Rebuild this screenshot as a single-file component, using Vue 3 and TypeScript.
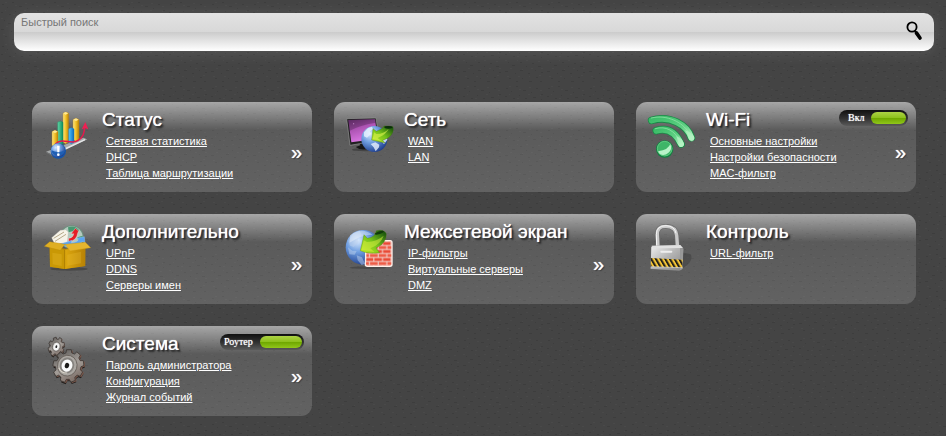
<script setup lang="ts">
import { ref } from 'vue'

type IconName = 'stats' | 'network' | 'wifi' | 'box' | 'firewall' | 'lock' | 'gears'

interface Card {
  icon: IconName
  title: string
  links: string[]
  more?: boolean
  toggle?: string
  wide?: boolean
}

const query = ref('')

const cards: Card[] = [
  { icon: 'stats', title: 'Статус', links: ['Сетевая статистика', 'DHCP', 'Таблица маршрутизации'], more: true },
  { icon: 'network', title: 'Сеть', links: ['WAN', 'LAN'] },
  { icon: 'wifi', title: 'Wi-Fi', links: ['Основные настройки', 'Настройки безопасности', 'MAC-фильтр'], more: true, toggle: 'Вкл' },
  { icon: 'box', title: 'Дополнительно', links: ['UPnP', 'DDNS', 'Серверы имен'], more: true },
  { icon: 'firewall', title: 'Межсетевой экран', links: ['IP-фильтры', 'Виртуальные серверы', 'DMZ'], more: true },
  { icon: 'lock', title: 'Контроль', links: ['URL-фильтр'] },
  { icon: 'gears', title: 'Система', links: ['Пароль администратора', 'Конфигурация', 'Журнал событий'], more: true, toggle: 'Роутер', wide: true },
]

// Outline of a gear centred on 0,0
function gear(teeth: number, outer: number, inner: number): string {
  const step = (Math.PI * 2) / teeth
  const points: string[] = []
  for (let i = 0; i < teeth; i++) {
    const a = i * step
    const pairs: [number, number][] = [[inner, 0], [outer, 0.1], [outer, 0.54], [inner, 0.66]]
    for (const [r, t] of pairs) {
      points.push(`${(Math.cos(a + t * step) * r).toFixed(1)},${(Math.sin(a + t * step) * r).toFixed(1)}`)
    }
  }
  return points.join(' ')
}

const bigGear = gear(9, 43, 35)
const smallGear = gear(8, 27, 21)
</script>

<template>
  <div class="page">
    <svg class="defs" width="0" height="0" aria-hidden="true">
      <defs>
        <radialGradient id="globe" cx="0.35" cy="0.3" r="0.75">
          <stop offset="0" stop-color="#dcecff" />
          <stop offset="0.45" stop-color="#6f9ee0" />
          <stop offset="1" stop-color="#1d3d8c" />
        </radialGradient>
        <linearGradient id="leaf" x1="0" y1="1" x2="1" y2="0">
          <stop offset="0" stop-color="#c6ee28" />
          <stop offset="0.5" stop-color="#73c11a" />
          <stop offset="1" stop-color="#083f0a" />
        </linearGradient>
        <linearGradient id="gold" x1="0" x2="1">
          <stop offset="0" stop-color="#f9e184" />
          <stop offset="0.5" stop-color="#f2c227" />
          <stop offset="1" stop-color="#b97f08" />
        </linearGradient>
        <linearGradient id="teal" x1="0" x2="1">
          <stop offset="0" stop-color="#63d7a6" />
          <stop offset="1" stop-color="#0c8c5c" />
        </linearGradient>
        <linearGradient id="azure" x1="0" x2="1">
          <stop offset="0" stop-color="#52c8ff" />
          <stop offset="1" stop-color="#0b69ba" />
        </linearGradient>
        <linearGradient id="screen" x1="0" y1="0" x2="0.4" y2="1">
          <stop offset="0" stop-color="#6a3070" />
          <stop offset="0.4" stop-color="#a850ae" />
          <stop offset="1" stop-color="#dc79e5" />
        </linearGradient>
        <linearGradient id="mint" x1="0" y1="0" x2="1" y2="1">
          <stop offset="0" stop-color="#3bbc68" />
          <stop offset="0.6" stop-color="#5fd083" />
          <stop offset="1" stop-color="#b5f2c2" />
        </linearGradient>
        <linearGradient id="steel" x1="0" y1="0" x2="1" y2="1">
          <stop offset="0" stop-color="#eeeeee" />
          <stop offset="0.5" stop-color="#b5b5b5" />
          <stop offset="1" stop-color="#888888" />
        </linearGradient>
        <linearGradient id="cog" x1="0" y1="0" x2="1" y2="1">
          <stop offset="0" stop-color="#4c4a48" />
          <stop offset="0.5" stop-color="#a39d98" />
          <stop offset="1" stop-color="#6d5b53" />
        </linearGradient>
        <linearGradient id="card-board" x1="0" x2="1">
          <stop offset="0" stop-color="#dda80f" />
          <stop offset="1" stop-color="#b88204" />
        </linearGradient>
        <pattern id="hazard" width="14" height="30" patternUnits="userSpaceOnUse" patternTransform="skewX(30)">
          <rect width="14" height="30" fill="#f5c535" />
          <rect width="7" height="30" fill="#23211b" />
        </pattern>
        <pattern id="bricks" width="26" height="24" patternUnits="userSpaceOnUse" x="118" y="100">
          <rect width="26" height="24" fill="#f2d8d1" />
          <rect x="1" y="2" width="23" height="9" fill="#e94a36" />
          <rect x="-12" y="14" width="23" height="9" fill="#ee5b46" />
          <rect x="14" y="14" width="23" height="9" fill="#ee5b46" />
        </pattern>
      </defs>
    </svg>

    <form class="search" role="search" @submit.prevent>
      <input v-model="query" class="search-input" type="search" placeholder="Быстрый поиск" aria-label="Быстрый поиск" />
      <button class="search-button" type="submit" aria-label="Найти">
        <svg viewBox="0 0 18 22" width="18" height="22" aria-hidden="true">
          <circle cx="6" cy="7" r="4.6" fill="none" stroke="#000" stroke-width="1.8" />
          <path d="M8.8 10.8 10.3 12.9" stroke="#000" stroke-width="1.6" />
          <path d="M10.4 12.9 14 18" stroke="#000" stroke-width="3.6" stroke-linecap="round" />
        </svg>
      </button>
    </form>

    <main class="cards">
      <section v-for="card in cards" :key="card.title" class="card">
        <svg v-if="card.icon === 'stats'" class="icon" viewBox="60 51 144 144" aria-hidden="true">
          <path d="M66 170 178 128 190 133 86 180Z" fill="#a6a9aa" />
          <path d="M86 176 182 132 184 136 90 181Z" fill="#e3e5e6" />
          <path d="M66 170 86 180 86 184 68 174Z" fill="#717374" />
          <g stroke-width="1">
            <path d="M117 55Q125 49 134 55V141L125 146 117 141Z" fill="url(#gold)" stroke="#c68c10" />
            <path d="M101 82Q109 75 117 82V148L109 152 101 148Z" fill="url(#teal)" stroke="#168b61" />
            <path d="M147 74Q156 67 165 74V134L156 139 147 134Z" fill="url(#gold)" stroke="#c68c10" />
            <path d="M134 102Q142 94 150 102V142L142 147 134 142Z" fill="url(#azure)" stroke="#1476bd" />
            <path d="M84 110Q93 103 102 110V150L93 158 84 152Z" fill="url(#gold)" stroke="#c68c10" />
          </g>
          <path d="M118 55 125 51 133 55 125 59ZM148 74 156 70 164 74 156 78ZM85 110 93 106 101 110 93 114Z" fill="#ffe996" />
          <path d="M94 147C118 125 139 151 161 137C178 127 180 114 182 99" fill="none" stroke="#e8174c" stroke-width="4.5" />
          <path d="M184 81 193 103 183 99 173 103Z" fill="#f01f52" />
          <circle cx="103" cy="168" r="23" fill="#1455a9" />
          <circle cx="102" cy="166" r="21" fill="url(#globe)" />
          <path d="M82 166A21 21 0 0 0 123 166Q103 177 82 166" fill="#1f5fb3" />
          <path d="M99 152H107L106 172H100Z" fill="#fff" />
          <circle cx="103" cy="179" r="4" fill="#fff" />
        </svg>

        <svg v-else-if="card.icon === 'network'" class="icon" viewBox="60 51 144 144" aria-hidden="true">
          <ellipse cx="120" cy="164" rx="42" ry="5" fill="#333" opacity=".6" />
          <path d="M98 142 124 138 127 153 137 158Q108 170 89 156L103 151Z" fill="#171717" />
          <path d="M62 71 150 69 160 136 72 151Z" fill="#202020" stroke="#949494" stroke-width="2" />
          <path d="M67 75 147 73 155 131 76 142Z" fill="url(#screen)" />
          <path d="M67 75 147 73 149 83Q98 91 70 108Z" fill="#3d1d42" opacity=".35" />
          <circle cx="83" cy="86" r="1.5" fill="#e7b1ee" />
          <circle cx="145" cy="132" r="39" fill="url(#globe)" />
          <path d="M114 112 126 99 138 95 141 103 132 109 135 117 123 128 114 124ZM134 147 148 142 160 149 159 157 149 169 143 157ZM168 122 181 123 184 134 174 148 167 139Z" fill="#e8f2ff" opacity=".8" />
          <path d="M137 135 141 101 151 109Q171 102 174 93Q185 93 201 95Q207 123 170 136L177 144Z" fill="url(#leaf)" stroke="#376e10" stroke-width="1" />
          <path d="M145 112 140 132 166 138 155 129Q181 118 188 101Q176 116 151 117Z" fill="#d7ef4b" opacity=".65" />
          <ellipse cx="187" cy="97" rx="12" ry="4" fill="#0b2e0a" />
        </svg>

        <svg v-else-if="card.icon === 'wifi'" class="icon" viewBox="54 51 144 144" aria-hidden="true">
          <g fill="none" stroke-linecap="round">
            <path d="M65 76C121 60 171 90 184 128" stroke="#198a47" stroke-width="23" />
            <path d="M65 76C121 60 171 90 184 128" stroke="url(#mint)" stroke-width="18" />
            <path d="M64 69C112 57 159 83 176 112" stroke="#9ae9af" stroke-width="2" />
            <path d="M79 107C116 96 139 117 153 147" stroke="#198a47" stroke-width="23" />
            <path d="M79 107C116 96 139 117 153 147" stroke="url(#mint)" stroke-width="18" />
            <path d="M76 101C109 91 135 109 149 137" stroke="#9ae9af" stroke-width="2" />
          </g>
          <path d="M165 106Q183 110 193 128Q193 139 183 139ZM139 124Q159 131 162 147Q161 158 150 156Z" fill="#b2f2c2" opacity=".7" />
          <circle cx="104" cy="162" r="26" fill="#127f41" />
          <circle cx="104" cy="161" r="23" fill="#3eb567" />
          <path d="M84 169Q116 164 121 146A24 24 0 0 1 88 177Z" fill="#b9f2c8" />
          <circle cx="104" cy="161" r="22" fill="none" stroke="#6fd48e" stroke-width="2" />
        </svg>

        <svg v-else-if="card.icon === 'box'" class="icon" viewBox="60 48 144 144" aria-hidden="true">
          <ellipse cx="135" cy="183" rx="56" ry="5" fill="#333" opacity=".5" />
          <circle cx="143" cy="88" r="36" fill="#6d8f7e" />
          <circle cx="143" cy="88" r="33" fill="#b4cabf" />
          <path d="M132 58Q152 51 165 66L159 79 145 70 134 73ZM160 88 176 83 178 99 164 104Z" fill="#489971" />
          <path d="M83 89 109 67 125 65 133 72 130 103 93 110Z" fill="#f6f3e8" stroke="#bbb7ad" stroke-width="1" />
          <path d="M89 91 120 72M93 100 126 79" stroke="#b7aa8b" stroke-width="3" />
          <path d="M134 101 134 91Q148 89 149 77L141 78 154 61 164 69 161 75Q159 98 134 101Z" fill="#e51e26" stroke="#fff" stroke-width="1" />
          <path d="M109 108 144 97 142 104Q162 103 164 93L158 91 181 86 183 105 175 101Q159 117 121 114Z" fill="#5ba4f1" stroke="#acd5ff" stroke-width="1" />
          <path d="M77 111 124 122 184 111 183 174 122 183 78 176Z" fill="#ac7d07" />
          <path d="M77 115 122 125V183L78 176Z" fill="#c99805" />
          <path d="M122 125 184 113V174L122 183Z" fill="url(#card-board)" />
          <path d="M77 101 61 115 109 127 123 109Z" fill="#dfae22" stroke="#b98907" stroke-width="1" />
          <path d="M123 109 184 103 200 119 138 129Z" fill="#e5b52e" stroke="#c69510" stroke-width="1" />
          <path d="M85 134 113 139V174L86 169ZM130 140 171 131V166L130 173Z" fill="#f6cd45" opacity=".22" />
          <path d="M122 126V183" stroke="#9e7100" stroke-width="2" />
        </svg>

        <svg v-else-if="card.icon === 'firewall'" class="icon" viewBox="60 48 144 144" aria-hidden="true">
          <ellipse cx="126" cy="179" rx="55" ry="4" fill="#333" opacity=".5" />
          <circle cx="111" cy="118" r="52" fill="url(#globe)" />
          <path d="M67 99 82 76 101 68 106 81 96 92 98 103 83 117 72 113ZM92 142 108 148 117 167 107 171 95 157ZM66 118 79 128 92 129 86 140 70 139Z" fill="#bcd0eb" opacity=".5" />
          <path d="M72 82Q106 55 140 80Q105 80 71 104Z" fill="#fff" opacity=".35" />
          <path d="M119 147V127H140V111H159V102Q159 98 164 98H193Q198 98 198 104V169Q198 175 192 175H124Q118 175 118 169Z" fill="url(#bricks)" stroke="#fff0ea" stroke-width="4" stroke-linejoin="round" />
          <path d="M103 128 114 80 124 91Q148 87 151 68Q175 63 181 78Q182 106 150 120L161 134Q127 139 103 128Z" fill="url(#leaf)" stroke="#477b09" stroke-width="1" />
          <path d="M113 97 107 125 145 132 133 121Q164 109 173 83Q153 101 123 102Z" fill="#d6ec3f" opacity=".55" />
          <ellipse cx="160" cy="74" rx="14" ry="4" fill="#103b0a" transform="rotate(-18 160 74)" />
        </svg>

        <svg v-else-if="card.icon === 'lock'" class="icon" viewBox="54 48 144 144" aria-hidden="true">
          <path d="M151 132 182 139Q192 160 158 181Z" fill="#292929" opacity=".3" />
          <path d="M84 119 82 80Q81 54 108 55Q138 56 140 82L143 122" fill="none" stroke="#6c6c6c" stroke-width="14" />
          <path d="M84 119 82 80Q81 54 108 55Q138 56 140 82L143 122" fill="none" stroke="#c9c9c9" stroke-width="10" />
          <path d="M80 116 79 80Q79 53 108 53Q134 54 138 76" fill="none" stroke="#f6f6f6" stroke-width="3" />
          <path d="M65 113 151 111 160 122 157 184 147 188 62 183Z" fill="#868686" />
          <path d="M64 116 151 120V187L62 182Z" fill="url(#steel)" />
          <path d="M151 119 160 122 158 182 150 187Z" fill="#999" />
          <path d="M65 113 151 111 159 120 69 121Z" fill="#e1e1e1" />
          <path d="M63 150 158 155 157 179 62 176Z" fill="url(#hazard)" />
          <path d="M63 176 157 179" stroke="#ddd" stroke-width="2" />
          <rect x="91" y="128" width="36" height="6" rx="3" fill="#eee" />
        </svg>

        <svg v-else class="icon" viewBox="60 48 144 144" aria-hidden="true">
          <g transform="translate(97 80) rotate(16) scale(.9 1.08)">
            <polygon :points="smallGear" fill="#292421" transform="translate(3 4)" />
            <polygon :points="smallGear" fill="#8d6c60" transform="translate(2 1)" />
            <polygon :points="smallGear" fill="url(#cog)" stroke="#3a3532" stroke-width="2" />
            <circle r="13" fill="#c6c4c0" stroke="#5d5855" stroke-width="2" />
            <ellipse rx="9" ry="10" fill="#f6f6f6" />
            <ellipse rx="3" ry="4" fill="#252525" />
          </g>
          <g transform="translate(133 138) rotate(18) scale(1.08 1.16)">
            <polygon :points="bigGear" fill="#231f1d" transform="translate(4 4)" />
            <polygon :points="bigGear" fill="#7e594c" transform="translate(4 1)" />
            <polygon :points="bigGear" fill="url(#cog)" stroke="#3b3632" stroke-width="2" />
            <circle cx="-3" r="27" fill="#aaa6a1" stroke="#625b55" stroke-width="2" />
            <ellipse cx="-4" rx="20" ry="21" fill="#85827e" />
            <ellipse cx="-4" rx="15" ry="16" fill="#fbfbfb" />
            <ellipse cx="-4" rx="6" ry="7" fill="#1c1b19" />
            <path d="M-24 12Q-11 24 3 18" fill="none" stroke="#ddd8cd" stroke-width="3" />
          </g>
        </svg>

        <div class="content">
          <header class="head">
            <h2 class="title">{{ card.title }}</h2>
            <label v-if="card.toggle" class="toggle" :class="{ wide: card.wide }">
              <span>{{ card.toggle }}</span>
              <input class="knob" type="checkbox" checked />
            </label>
          </header>
          <div class="body">
            <ul class="links">
              <li v-for="link in card.links" :key="link"><a href="#">{{ link }}</a></li>
            </ul>
            <button v-if="card.more" class="more" type="button" :aria-label="`${card.title}: все разделы`">»</button>
          </div>
        </div>
      </section>
    </main>
  </div>
</template>

<style>
body {
  background-color: #444;
  background-image: url("data:image/svg+xml,%3Csvg xmlns='http://www.w3.org/2000/svg' width='42' height='42' shape-rendering='crispEdges' fill='none'%3E%3Cpath stroke='%233d3d3d' d='M2 4h2m3 3h1m4-5h2m5 4h3m5 2h1m4-4h2m3 6h2M1 12h2m6 2h2m4-3h1m5 3h2m6-1h3m5 2h1M4 20h1m3 3h3m5-3h2m4 4h1m5-3h2m4 3h3M1 29h3m7 2h1m4-3h3m5 3h2m5-3h1m5 2h2M5 36h2m5 3h2m4-3h1m6 3h3m4-4h2m2 4h2'/%3E%3Cpath stroke='%23494949' d='M5 2h2m8 3h2m8-2h2m9 3h2M5 10h1m7 4h2m9-4h2m10 1h1M1 18h2m10 0h1m8 0h2m10 1h2M6 26h2m10 1h1m8-1h2m8 0h2M3 34h2m9 0h2m9 0h1m9-1h2'/%3E%3C/svg%3E");
}
</style>

<style scoped>
.page {
  padding: 13px 12px 20px 14px;
  font-family: "Liberation Sans", Arial, sans-serif;
  font-size: 11px;
  color: #fff;
}

.defs {
  position: absolute;
}

.search {
  display: flex;
  align-items: flex-start;
  height: 38px;
  border-radius: 10px;
  background: linear-gradient(#e2e2e2, #d8d8d8 50%, #cccccc 51%, #fff);
  box-shadow: 0 2px 16px rgba(255, 255, 255, 0.1);
}

.search-input {
  flex: 1;
  min-width: 0;
  height: 18px;
  padding: 0 7px;
  border: 0;
  outline: 0;
  background: none;
  font: inherit;
  color: #333;
}

.search-input::placeholder {
  color: #777;
}

.search-button {
  padding: 7px 10px 0;
  border: 0;
  background: none;
  line-height: 0;
  cursor: pointer;
}

.cards {
  display: grid;
  grid-template-columns: repeat(3, minmax(0, 1fr));
  gap: 22px;
  padding: 51px 18px 0;
}

.card {
  display: flex;
  gap: 10px;
  min-height: 90px;
  box-sizing: border-box;
  padding: 8px 8px 8px 12px;
  border-radius: 11px;
  background: linear-gradient(rgba(255, 255, 255, 0.53), rgba(255, 255, 255, 0.12) 28px, rgba(255, 255, 255, 0.16));
}

.icon {
  flex: none;
  width: 48px;
  height: 48px;
  margin-top: 2px;
  overflow: visible;
}

.content {
  flex: 1;
  min-width: 0;
}

.head {
  display: flex;
  justify-content: space-between;
  align-items: flex-start;
  height: 23px;
}

.title {
  margin: 0;
  font-size: 19px;
  font-weight: 400;
  line-height: 20px;
  white-space: nowrap;
  text-shadow: 0 0 1px #fff, 2px 2px 2px #222, 1px 1px 1px #222;
}

.toggle {
  display: flex;
  align-items: center;
  justify-content: space-between;
  box-sizing: border-box;
  width: 69px;
  height: 16px;
  padding: 0 2px 0 9px;
  border-radius: 8px;
  background: linear-gradient(#101010, #333 55%, #5a5a5a);
  font-family: "Liberation Serif", "Times New Roman", serif;
  font-size: 10px;
  line-height: 14px;
  text-shadow: 0 0 1px #fff;
}

.toggle.wide {
  width: 84px;
  padding-left: 4px;
}

.knob {
  width: 35px;
  height: 12px;
  margin: 0;
  border-radius: 6px;
  appearance: none;
  background: linear-gradient(#add245, #8dc11c 48%, #6fa700 52%, #91c71a);
}

.wide .knob {
  width: 42px;
}

.body {
  display: flex;
  justify-content: space-between;
  align-items: flex-start;
  padding-left: 4px;
}

.links {
  margin: 0;
  padding: 0;
  list-style: none;
  line-height: 16px;
}

.links a {
  color: #fff;
  text-decoration: underline;
  text-underline-offset: 1px;
}

.more {
  padding: 0 2px;
  border: 0;
  background: none;
  color: #fff;
  font: 20px/38px "Liberation Sans", Arial, sans-serif;
  text-shadow: 0 0 1px #fff, 1px 1px 1px #333;
  cursor: pointer;
}
</style>
